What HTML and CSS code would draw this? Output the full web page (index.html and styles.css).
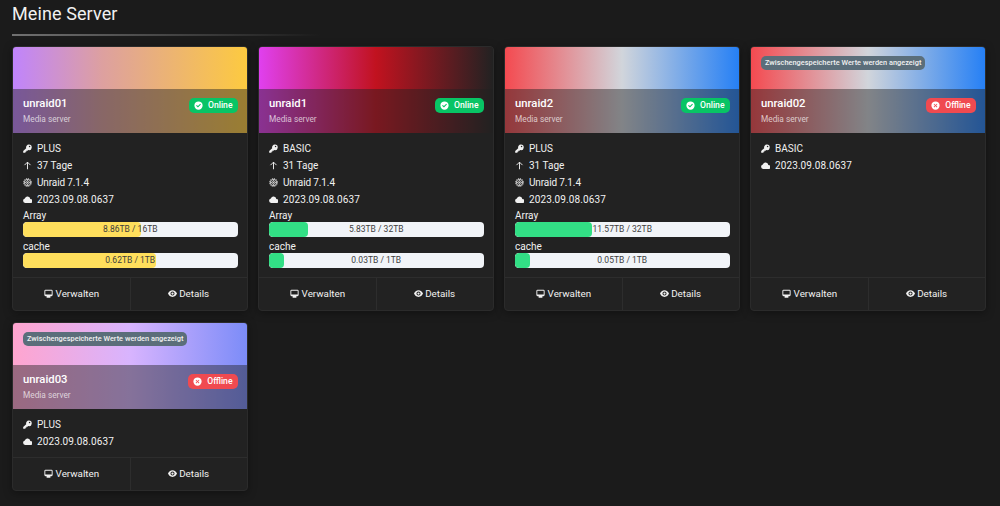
FILE: index.html
```html
<!DOCTYPE html>
<html lang="de">
<head>
    <meta charset="UTF-8">
    <meta name="viewport" content="width=device-width, initial-scale=1.0">
    <title>Meine Server</title>
    <link rel="stylesheet" href="styles.css">
</head>
<body>
    <!-- icon sprite -->
    <svg class="sprite" width="0" height="0">
        <symbol id="key" viewBox="0 0 24 24"><path fill-rule="evenodd" d="M15.5 1.500a7.500 7.500 0 0 0-7 9.500L0.500 18.500V23H6.500V20.500h2.500v-2.500H12l2-1.700A7.500 7.500 0 1 0 15.500 1.500zM17.500 4.500a2 2 0 1 1 0 4 2 2 0 0 1 0-4z"/></symbol>
        <symbol id="up" viewBox="0 0 24 24"><path fill="none" stroke="currentColor" stroke-width="2.500" d="M12 22V3M4 11l8-8 8 8"/></symbol>
        <symbol id="gear" viewBox="0 0 24 24"><g fill="none" stroke="currentColor"><circle cx="12" cy="12" r="8.500" stroke-width="2.200"/><circle cx="12" cy="12" r="4" stroke-width="2"/><circle cx="12" cy="12" r="10.800" stroke-width="2" stroke-dasharray="2.830 2.830"/><path stroke-width="1.600" d="M12 3.500V8M12 16v4.500M3.500 12H8M16 12h4.500"/></g><circle cx="12" cy="12" r="1.500"/></symbol>
        <symbol id="cloud" viewBox="0 0 24 24"><path d="M19.500 10.500A7.500 7.500 0 0 0 5 9a6.400 6.400 0 0 0 .5 12.500h14a5.500 5.500 0 0 0 0-11z"/></symbol>
        <symbol id="monitor" viewBox="0 0 24 24"><path fill-rule="evenodd" d="M4 2h16a3 3 0 0 1 3 3v11a3 3 0 0 1-3 3h-3v4H7v-4H4a3 3 0 0 1-3-3V5a3 3 0 0 1 3-3zm-.500 2.500v10h17v-10z"/></symbol>
        <symbol id="eye" viewBox="0 0 24 24"><path fill-rule="evenodd" d="M12 3C6.500 3 2 7 0 12c2 5 6.500 9 12 9S22 17 24 12c-2-5-6.500-9-12-9zM12 6.500a5.500 5.500 0 1 1 0 11 5.500 5.500 0 0 1 0-11z"/><circle cx="12" cy="12" r="3"/></symbol>
        <symbol id="check" viewBox="0 0 24 24"><path fill-rule="evenodd" d="M12 1a11 11 0 1 0 0 22 11 11 0 0 0 0-22zM10.500 17.500 5.500 12.500l2-2 3 3 6-6 2 2z"/></symbol>
        <symbol id="cross" viewBox="0 0 24 24"><path fill-rule="evenodd" d="M12 1a11 11 0 1 0 0 22 11 11 0 0 0 0-22zM8.500 7 12 10.500 15.500 7 17 8.500 13.500 12l3.500 3.500-1.500 1.500-3.500-3.500L8.500 17 7 15.500l3.500-3.500L7 8.500z"/></symbol>
    </svg>

    <h1 class="page-title">Meine Server</h1>
    <hr class="divider">

    <div class="server-grid">
        <div class="card">
            <div class="card-header gold">
                <div class="banner"></div>
                <div class="overlay">
                    <div>
                        <h2>unraid01</h2>
                        <p>Media server</p>
                    </div>
                    <span class="badge online"><svg><use href="#check"/></svg>Online</span>
                </div>
            </div>
            <div class="card-body">
                <div class="info"><svg><use href="#key"/></svg>PLUS</div>
                <div class="info"><svg><use href="#up"/></svg>37 Tage</div>
                <div class="info"><svg><use href="#gear"/></svg><span class="version">Unraid 7.1.4</span></div>
                <div class="info"><svg><use href="#cloud"/></svg><span class="date">2023.09.08.0637</span></div>
                <div class="disk">Array</div>
                <div class="progress yellow"><div class="fill" style="width: 55%"></div><span>8.86TB / 16TB</span></div>
                <div class="disk">cache</div>
                <div class="progress yellow"><div class="fill" style="width: 62%"></div><span>0.62TB / 1TB</span></div>
            </div>
            <div class="card-footer">
                <a><svg><use href="#monitor"/></svg>Verwalten</a>
                <a><svg><use href="#eye"/></svg>Details</a>
            </div>
        </div>

        <div class="card">
            <div class="card-header crimson">
                <div class="banner"></div>
                <div class="overlay">
                    <div>
                        <h2>unraid1</h2>
                        <p>Media server</p>
                    </div>
                    <span class="badge online"><svg><use href="#check"/></svg>Online</span>
                </div>
            </div>
            <div class="card-body">
                <div class="info"><svg><use href="#key"/></svg>BASIC</div>
                <div class="info"><svg><use href="#up"/></svg>31 Tage</div>
                <div class="info"><svg><use href="#gear"/></svg><span class="version">Unraid 7.1.4</span></div>
                <div class="info"><svg><use href="#cloud"/></svg><span class="date">2023.09.08.0637</span></div>
                <div class="disk">Array</div>
                <div class="progress green"><div class="fill" style="width: 18%"></div><span>5.83TB / 32TB</span></div>
                <div class="disk">cache</div>
                <div class="progress green"><div class="fill" style="width: 7%"></div><span>0.03TB / 1TB</span></div>
            </div>
            <div class="card-footer">
                <a><svg><use href="#monitor"/></svg>Verwalten</a>
                <a><svg><use href="#eye"/></svg>Details</a>
            </div>
        </div>

        <div class="card">
            <div class="card-header tricolor">
                <div class="banner"></div>
                <div class="overlay">
                    <div>
                        <h2>unraid2</h2>
                        <p>Media server</p>
                    </div>
                    <span class="badge online"><svg><use href="#check"/></svg>Online</span>
                </div>
            </div>
            <div class="card-body">
                <div class="info"><svg><use href="#key"/></svg>PLUS</div>
                <div class="info"><svg><use href="#up"/></svg>31 Tage</div>
                <div class="info"><svg><use href="#gear"/></svg><span class="version">Unraid 7.1.4</span></div>
                <div class="info"><svg><use href="#cloud"/></svg><span class="date">2023.09.08.0637</span></div>
                <div class="disk">Array</div>
                <div class="progress green"><div class="fill" style="width: 36%"></div><span>11.57TB / 32TB</span></div>
                <div class="disk">cache</div>
                <div class="progress green"><div class="fill" style="width: 7%"></div><span>0.05TB / 1TB</span></div>
            </div>
            <div class="card-footer">
                <a><svg><use href="#monitor"/></svg>Verwalten</a>
                <a><svg><use href="#eye"/></svg>Details</a>
            </div>
        </div>

        <div class="card">
            <div class="card-header tricolor">
                <div class="banner"><span class="cached">Zwischengespeicherte Werte werden angezeigt</span></div>
                <div class="overlay">
                    <div>
                        <h2>unraid02</h2>
                        <p>Media server</p>
                    </div>
                    <span class="badge offline"><svg><use href="#cross"/></svg>Offline</span>
                </div>
            </div>
            <div class="card-body">
                <div class="info"><svg><use href="#key"/></svg>BASIC</div>
                <div class="info"><svg><use href="#cloud"/></svg><span class="date">2023.09.08.0637</span></div>
            </div>
            <div class="card-footer">
                <a><svg><use href="#monitor"/></svg>Verwalten</a>
                <a><svg><use href="#eye"/></svg>Details</a>
            </div>
        </div>

        <div class="card">
            <div class="card-header pastel">
                <div class="banner"><span class="cached">Zwischengespeicherte Werte werden angezeigt</span></div>
                <div class="overlay">
                    <div>
                        <h2>unraid03</h2>
                        <p>Media server</p>
                    </div>
                    <span class="badge offline"><svg><use href="#cross"/></svg>Offline</span>
                </div>
            </div>
            <div class="card-body">
                <div class="info"><svg><use href="#key"/></svg>PLUS</div>
                <div class="info"><svg><use href="#cloud"/></svg><span class="date">2023.09.08.0637</span></div>
            </div>
            <div class="card-footer">
                <a><svg><use href="#monitor"/></svg>Verwalten</a>
                <a><svg><use href="#eye"/></svg>Details</a>
            </div>
        </div>
    </div>
</body>
</html>
```

FILE: styles.css
```css
* {
    margin: 0;
    padding: 0;
    box-sizing: border-box;
}

body {
    font-family: Roboto, "Liberation Sans", sans-serif;
    font-size: 10px;
    color: #f1f1f1;
    background: #1b1b1b;
    padding: 3px 12px 0;
    height: 506px;
    overflow: hidden;
}

svg {
    fill: currentColor;
    flex: none;
}

.sprite {
    display: none;
}

.page-title {
    font-size: 18px;
    line-height: 22px;
    font-weight: 400;
    letter-spacing: 0.1px;
}

.divider {
    width: 308px;
    height: 2px;
    margin: 9px 0 9.5px;
    border: none;
    background: linear-gradient(90deg, #717171, #1b1b1b);
}

.server-grid {
    display: grid;
    grid-template-columns: repeat(4, 235.5px);
    grid-template-rows: 265.5px 169px;
    gap: 10.5px;
}

.card {
    display: flex;
    flex-direction: column;
    background: #222;
    border: 1px solid #2b2b2b;
    border-radius: 4px;
    overflow: hidden;
    box-shadow: 0 2px 8px rgba(0, 0, 0, 0.35);
}

.card-header {
    height: 86px;
}

.gold {
    background: linear-gradient(90deg, #c084fc, #dda0a0 38%, #fdca40);
}

.crimson {
    background: linear-gradient(90deg, #e040ef, #c1121f 50%, #222);
}

.tricolor {
    background: linear-gradient(90deg, #f44a50, #d1d5db 50%, #2680f5);
}

.pastel {
    background: linear-gradient(90deg, #ffa5cf, #d8b4fe 50%, #7c8cf8);
}

.banner {
    height: 42px;
    padding: 9px 9px;
}

.cached {
    display: block;
    width: fit-content;
    height: 14px;
    line-height: 14px;
    margin-left: 1px;
    padding: 0 4px;
    border-radius: 5px;
    background: #5b6e7a;
    font-size: 7.4px;
    font-weight: 500;
    white-space: nowrap;
}

.overlay {
    display: flex;
    justify-content: space-between;
    height: 44px;
    padding: 8px 9px 0 10px;
    background: rgba(34, 34, 34, 0.45);
}

.overlay h2 {
    font-size: 11.3px;
    line-height: 14px;
    font-weight: 500;
    color: #fff;
}

.overlay p {
    margin-top: 2px;
    font-size: 8.3px;
    line-height: 12px;
    color: rgba(255, 255, 255, 0.7);
}

.badge {
    display: flex;
    align-items: center;
    gap: 5px;
    height: 15px;
    margin-top: 1px;
    padding: 0 5px;
    border-radius: 5px;
    font-size: 8.6px;
    font-weight: 500;
    color: #fff;
}

.badge svg {
    width: 9px;
    height: 9px;
}

.online {
    background: #08c465;
}

.offline {
    background: #f04a50;
}

.card-body {
    flex: 1;
    padding: 7px 9px 0 10px;
}

.info {
    display: flex;
    align-items: center;
    gap: 5px;
    height: 17px;
}

.info svg {
    width: 9px;
    height: 9px;
}

.date {
    letter-spacing: 0.1px;
}

.version {
    letter-spacing: -0.12px;
}

.disk {
    height: 14px;
    line-height: 15px;
}

.progress {
    position: relative;
    height: 15px;
    margin-bottom: 2px;
    border-radius: 4px;
    background: #f1f4f8;
    overflow: hidden;
    text-align: center;
    line-height: 15px;
    font-size: 8.5px;
    color: #3d3d3d;
}

.fill {
    position: absolute;
    left: 0;
    top: 0;
    height: 100%;
    border-radius: 4px;
}

.progress span {
    position: relative;
}

.yellow .fill {
    background: #ffdf5c;
}

.green .fill {
    background: #32df85;
}

.card-footer {
    display: grid;
    grid-template-columns: 1fr 1fr;
    height: 33px;
    border-top: 1px solid #2d2d2d;
}

.card-footer a {
    display: flex;
    align-items: center;
    justify-content: center;
    gap: 3px;
    font-size: 9.8px;
    padding-bottom: 1px;
}

.card-footer a + a {
    gap: 2px;
    border-left: 1px solid #2d2d2d;
}

.card-footer svg {
    width: 9px;
    height: 9px;
}
```
